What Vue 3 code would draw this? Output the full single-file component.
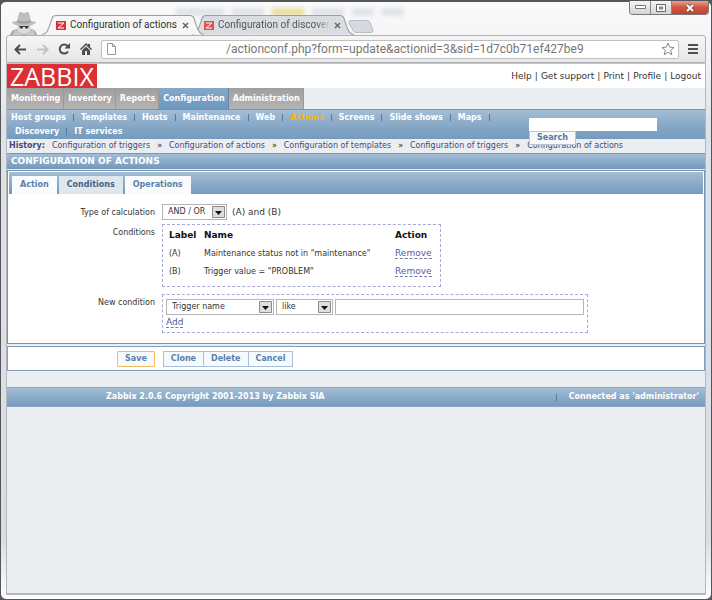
<script setup>
import { ref } from 'vue'

const browserTabs = [
  { title: 'Configuration of actions', active: true },
  { title: 'Configuration of discover', active: false }
]
const userLinks = ['Help', 'Get support', 'Print', 'Profile', 'Logout']
const mainMenu = ['Monitoring', 'Inventory', 'Reports', 'Configuration', 'Administration']
const subMenu = [
  ['Host groups', 'Templates', 'Hosts', 'Maintenance', 'Web', 'Actions', 'Screens', 'Slide shows', 'Maps'],
  ['Discovery', 'IT services']
]
const history = [
  'Configuration of triggers',
  'Configuration of actions',
  'Configuration of templates',
  'Configuration of triggers',
  'Configuration of actions'
]
const formTabs = ['Action', 'Conditions', 'Operations']
const conditions = [
  { label: '(A)', name: 'Maintenance status not in "maintenance"' },
  { label: '(B)', name: 'Trigger value = "PROBLEM"' }
]

const url = ref('/actionconf.php?form=update&actionid=3&sid=1d7c0b71ef427be9')
const search = ref('')
const value = ref('')
const activeTab = ref('Conditions')
</script>

<template>
  <div class="window">
    <header class="titlebar">
      <div class="glass">
        <i class="smudge wide"></i>
        <i class="smudge"></i>
        <i class="smudge yellow"></i>
        <i class="smudge"></i>
        <i class="smudge short"></i>
        <i class="smudge short"></i>
      </div>
      <svg class="incognito" width="28" height="24" viewBox="0 0 28 24">
        <path d="M0 24c1-4 4-6 8-6h12c4 0 6 2 7 6z" fill="#a9abad" />
        <path d="M7 12h14v4c0 4-3 7-7 7s-7-3-7-7z" fill="#dcdddd" />
        <path d="M7 10 9 2c2-2 3 0 5 0s3-2 5 0l2 8 5 1c0 2-5 4-12 4S2 13 2 11z" fill="#bbbdbf" />
        <path d="M7 9c4 2 10 2 14 0v2c-4 2-10 2-14 0z" fill="#9a9c9e" />
        <path d="M9 15h10l-1 2c-1 1-3 1-3-1h-2c0 2-2 2-3 1z" fill="#3f4143" />
        <path d="m5 18 8 6H3zm18 0-8 6h10z" fill="#c6c8c9" />
      </svg>
      <div
        v-for="tab in browserTabs"
        :key="tab.title"
        class="browser-tab"
        :class="{ active: tab.active }"
      >
        <svg class="tab-shape" viewBox="0 0 160 20" preserveAspectRatio="none">
          <path class="tab-fill" d="M0 19.500C4 19 5 17 7 12L10 3Q11 .5 14 .5H146Q149 .5 150 3L153 12C155 17 156 19 160 19.500z" />
          <path d="M0 19.500C4 19 5 17 7 12L10 3Q11 .5 14 .5H146Q149 .5 150 3L153 12C155 17 156 19 160 19.500" fill="none" stroke="#9b9da0" />
        </svg>
        <svg class="favicon" width="10" height="9" viewBox="0 0 10 9">
          <path d="M0 0h10v9H0z" fill="#dc3035" />
          <path d="M2 2h6L2 7h6" fill="none" stroke="#fff" />
        </svg>
        <span class="tab-title">{{ tab.title }}</span>
        <button class="tab-close" type="button" aria-label="Close tab">
          <svg width="7" height="7" viewBox="0 0 7 7"><path d="m1 1 5 5M6 1 1 6" stroke="#666" stroke-width="1.500" /></svg>
        </button>
      </div>
      <svg class="new-tab" width="26" height="13" viewBox="0 0 26 13">
        <path d="M3 .5h16q2 0 3 2l3 8q0 2-2 2H8q-2 0-3-2L1 3Q0 .5 3 .5z" fill="#d5dae0" stroke="#b9bdc2" />
      </svg>
      <div class="window-buttons">
        <button type="button" aria-label="Minimize">
          <svg width="11" height="5" viewBox="0 0 11 5"><path d="M.5.5h10v3H.5z" fill="#fff" stroke="#777" /></svg>
        </button>
        <button type="button" aria-label="Maximize">
          <svg width="10" height="8" viewBox="0 0 10 8"><path d="M.5.5h9v7h-9z" fill="#fff" stroke="#666" /><path d="M3.500 3h3v2h-3z" fill="#ccc" stroke="#666" /></svg>
        </button>
        <button class="close" type="button" aria-label="Close">
          <svg width="10" height="8" viewBox="0 0 10 8"><path d="m2 1 6 6M8 1 2 7" stroke="#734b48" stroke-width="3.500" /><path d="m2 1 6 6M8 1 2 7" stroke="#fff" stroke-width="2" /></svg>
        </button>
      </div>
    </header>

    <div class="toolbar">
      <button type="button" aria-label="Back">
        <svg width="13" height="11" viewBox="0 0 13 11"><path d="M12 5.500H2M6 1 1.500 5.500 6 10" fill="none" stroke="#4c4c4c" stroke-width="2" /></svg>
      </button>
      <button type="button" aria-label="Forward">
        <svg width="13" height="11" viewBox="0 0 13 11"><path d="M1 5.500h10M7 1l4.500 4.500L7 10" fill="none" stroke="#c2c2c2" stroke-width="2" /></svg>
      </button>
      <button type="button" aria-label="Reload">
        <svg width="13" height="12" viewBox="0 0 13 12"><path d="M10 8.500A4.500 4.500 0 1 1 9.500 3" fill="none" stroke="#4c4c4c" stroke-width="2" /><path d="M12 0v5.500H6.500z" fill="#4c4c4c" /></svg>
      </button>
      <button type="button" aria-label="Home">
        <svg width="12" height="12" viewBox="0 0 12 12"><path d="M6 0 0 6l1 1 5-5 5 5 1-1-2-2V1H8v1z" fill="#4c4c4c" /><path d="M2 7.500 6 3.500l4 4V12H7V8H5v4H2z" fill="#4c4c4c" /></svg>
      </button>
      <div class="omnibox">
        <svg width="9" height="12" viewBox="0 0 9 12"><path d="M.5.5h5l3 3v8h-8zM5.500.5v3h3" fill="#fff" stroke="#999" /></svg>
        <input v-model="url" type="text" aria-label="Address">
        <svg width="14" height="14" viewBox="0 0 14 14"><path d="m7 1 1.700 4.200 4.300.3-3.300 2.900 1.100 4.300L7 10.300l-3.800 2.400 1.100-4.300L1 5.500l4.300-.3z" fill="#fff" stroke="#888" /></svg>
      </div>
      <button class="menu-button" type="button" aria-label="Menu">
        <svg width="10" height="10" viewBox="0 0 10 10"><path d="M0 1h10M0 5h10M0 9h10" stroke="#505050" stroke-width="2" /></svg>
      </button>
    </div>

    <main class="page">
      <div class="page-header">
        <a class="logo" href="#">ZABBIX</a>
        <nav class="user-links">
          <template v-for="(link, i) in userLinks" :key="link">
            <span v-if="i">|</span>
            <a href="#">{{ link }}</a>
          </template>
        </nav>
      </div>

      <nav class="main-menu">
        <a
          v-for="item in mainMenu"
          :key="item"
          href="#"
          :class="{ active: item === 'Configuration' }"
        >{{ item }}</a>
      </nav>

      <div class="sub-menu">
        <nav v-for="(row, i) in subMenu" :key="i" class="sub-row">
          <a
            v-for="item in row"
            :key="item"
            href="#"
            :class="{ active: item === 'Actions' }"
          >{{ item }}</a>
        </nav>
        <form class="search" @submit.prevent>
          <input v-model="search" type="text" aria-label="Search">
          <button type="submit">Search</button>
        </form>
      </div>

      <div class="history">
        <b>History:</b>
        <template v-for="(item, i) in history" :key="i">
          <span v-if="i">»</span>
          <a href="#">{{ item }}</a>
        </template>
      </div>

      <h1 class="page-title">CONFIGURATION OF ACTIONS</h1>

      <section class="panel">
        <div class="form-tabs">
          <button
            v-for="tab in formTabs"
            :key="tab"
            type="button"
            :class="{ active: tab === activeTab }"
            @click="activeTab = tab"
          >{{ tab }}</button>
        </div>
        <div class="form">
          <label class="form-label" for="calc">Type of calculation</label>
          <div class="calc">
            <span class="select calc-select">
              <select id="calc"><option>AND / OR</option></select>
              <svg width="13" height="12" viewBox="0 0 13 12"><path d="M.5.5h12v11H.5z" fill="#dedede" stroke="#8c8c8c" /><path d="M3 5h7L6.500 9z" fill="#111" /></svg>
            </span>
            <span class="formula">(A) and (B)</span>
          </div>

          <span class="form-label">Conditions</span>
          <div class="dashed conditions">
            <table>
              <thead>
                <tr><th>Label</th><th>Name</th><th>Action</th></tr>
              </thead>
              <tbody>
                <tr v-for="c in conditions" :key="c.label">
                  <td>{{ c.label }}</td>
                  <td>{{ c.name }}</td>
                  <td><a class="link" href="#">Remove</a></td>
                </tr>
              </tbody>
            </table>
          </div>

          <label class="form-label" for="condition">New condition</label>
          <div class="dashed new-condition">
            <div class="fields">
              <span class="select name-select">
                <select id="condition"><option>Trigger name</option></select>
                <svg width="13" height="12" viewBox="0 0 13 12"><path d="M.5.5h12v11H.5z" fill="#dedede" stroke="#8c8c8c" /><path d="M3 5h7L6.500 9z" fill="#111" /></svg>
              </span>
              <span class="select operator-select">
                <select aria-label="Operator"><option>like</option></select>
                <svg width="13" height="12" viewBox="0 0 13 12"><path d="M.5.5h12v11H.5z" fill="#dedede" stroke="#8c8c8c" /><path d="M3 5h7L6.500 9z" fill="#111" /></svg>
              </span>
              <input v-model="value" type="text" aria-label="Value">
            </div>
            <a class="link" href="#">Add</a>
          </div>
        </div>
      </section>

      <div class="form-actions">
        <button class="save" type="button">Save</button>
        <div class="button-set">
          <button type="button">Clone</button>
          <button type="button">Delete</button>
          <button type="button">Cancel</button>
        </div>
      </div>

      <footer class="footer">
        <span class="copyright">Zabbix 2.0.6 Copyright 2001-2013 by Zabbix SIA</span>
        <span class="connected">Connected as 'administrator'</span>
      </footer>
    </main>
  </div>
</template>

<style>
body {
  margin: 0;
  background: #55565a;
}

* {
  box-sizing: border-box;
}
</style>

<style scoped>
.window {
  display: flex;
  flex-direction: column;
  min-height: 100vh;
  padding: 0 5px 4px;
  border: 1px solid #55565a;
  border-top-width: 2px;
  border-radius: 6px;
  background: linear-gradient(#fafafb, #f1f2f4 60px, #dfe3e8 120px, #d9dde3 90%, #fff);
  font: 8px/12px "DejaVu Sans", Verdana, sans-serif;
  color: #333;
}

button,
input,
select {
  margin: 0;
  padding: 0;
  border: 0;
  background: none;
  font: inherit;
  color: inherit;
}

a {
  color: inherit;
  text-decoration: none;
}

.titlebar {
  position: relative;
  display: flex;
  align-items: flex-end;
  height: 33px;
}

.glass {
  position: absolute;
  top: 6px;
  left: 170px;
  display: flex;
  gap: 8px;
  filter: blur(2px);
}

.smudge {
  width: 32px;
  height: 8px;
  background: #dfe3e7;
}

.smudge.wide {
  width: 48px;
}

.smudge.yellow {
  background: #e7dfa0;
}

.smudge.short {
  width: 22px;
}

.incognito {
  position: relative;
  margin-left: 4px;
}

.browser-tab {
  position: relative;
  z-index: 1;
  display: flex;
  align-items: center;
  width: 162px;
  height: 20px;
  margin-left: -12px;
  padding: 0 15px 0 12px;
  font: 10px/16px Roboto, sans-serif;
  color: #555;
}

.browser-tab.active {
  z-index: 2;
  margin-left: 4px;
  padding-left: 14px;
  color: #333;
}

.tab-shape {
  position: absolute;
  inset: 0;
  z-index: -1;
  width: 100%;
  height: 100%;
}

.tab-fill {
  fill: #d9dde2;
}

.active .tab-fill {
  fill: #f6f6f6;
}

.favicon {
  flex: none;
  margin-right: 4px;
}

.browser-tab:not(.active) .favicon {
  opacity: 0.8;
}

.tab-title {
  flex: 1;
  white-space: nowrap;
}

.browser-tab:not(.active) .tab-title {
  mask-image: linear-gradient(90deg, #000 88%, transparent);
}

.tab-close {
  display: flex;
  margin-left: 4px;
}

.new-tab {
  margin: 0 0 2px -6px;
}

.window-buttons {
  display: flex;
  align-self: flex-start;
  height: 14px;
  margin: -1px -3px 0 auto;
  border: 1px solid #77797c;
  border-top: 0;
  border-radius: 0 0 4px 4px;
  overflow: hidden;
}

.window-buttons button {
  display: flex;
  align-items: center;
  justify-content: center;
  width: 21px;
  border-right: 1px solid #888;
  background: linear-gradient(#f5f5f5, #d4d5d7);
}

.window-buttons .close {
  width: 36px;
  border-right: 0;
  background: linear-gradient(#e3a194, #d2563f 50%, #c5412b);
}

.toolbar {
  display: flex;
  align-items: center;
  gap: 9px;
  height: 28px;
  padding: 0 7px;
  border: 1px solid #b0b2b5;
  border-radius: 3px 3px 0 0;
  background: linear-gradient(#f6f6f6, #e6e6e6);
}

.toolbar button {
  display: flex;
}

.omnibox {
  display: flex;
  flex: 1;
  align-items: center;
  height: 19px;
  padding: 0 3px 0 5px;
  border: 1px solid #bfbfbf;
  border-radius: 2px;
  background: #fff;
}

.omnibox input {
  flex: 1;
  min-width: 0;
  padding-left: 110px;
  font: 12px/16px Roboto, sans-serif;
  color: #777;
}

.page {
  flex: 1;
  border: 1px solid #b5b8bb;
  border-width: 1px 1px 2px;
  border-top-color: #c5c5c5;
  background: #ebeef1;
}

.page-header {
  display: flex;
  align-items: center;
  justify-content: space-between;
  padding-right: 4px;
  background: #fff;
}

.logo {
  height: 24px;
  padding: 0 3px;
  background: #dc2f33;
  font: 25px/24px "Open Sans", sans-serif;
  color: #fff;
}

.user-links {
  display: flex;
  gap: 3px;
  font-size: 9px;
}

.main-menu {
  display: flex;
}

.main-menu a {
  height: 21px;
  padding: 0 3px 0 4px;
  border-right: 1px solid #999;
  background: linear-gradient(#9f9f9f, #b4b4b4);
  font-weight: bold;
  line-height: 22px;
  color: #fff;
}

.main-menu .active {
  border-right-color: #5f86ab;
  background: linear-gradient(#85a8c8, #6d98bf);
}

.sub-menu {
  position: relative;
  height: 30px;
  padding-top: 2px;
  border-top: 1px solid #7195b5;
  background: linear-gradient(#a4bdd5, #84a6c5 60%, #749bbf);
  font-weight: bold;
  color: #fff;
}

.sub-row {
  display: flex;
  height: 14px;
  padding-left: 4px;
}

.sub-row + .sub-row {
  padding-left: 8px;
}

.sub-row a {
  display: flex;
}

.sub-row a::after {
  width: 1px;
  height: 7px;
  margin: 2px 7px;
  background: #57799b;
  content: "";
}

.sub-row + .sub-row a:last-child::after {
  display: none;
}

.sub-row .active {
  color: #f5b800;
}

.search {
  position: absolute;
  top: 8px;
  right: 48px;
  z-index: 1;
  width: 128px;
}

.search input {
  display: block;
  width: 100%;
  height: 13px;
  background: #fff;
  color: #333;
}

.search button {
  display: block;
  height: 14px;
  padding: 0 7px;
  border: 1px solid #b4c8dc;
  background: #f7f9fb;
  color: #5478a4;
  font-weight: bold;
  line-height: 12px;
}

.history {
  display: flex;
  gap: 7px;
  height: 14px;
  padding: 1px 2px;
  white-space: nowrap;
  color: #48487d;
}

.history span {
  color: #222;
}

.page-title {
  height: 16px;
  margin: 0;
  padding-left: 4px;
  border: 1px solid #7898b6;
  border-width: 1px 0;
  background: linear-gradient(#a4bdd5, #749bbf);
  font-size: 9px;
  line-height: 14px;
  color: #fff;
}

.panel {
  margin-top: 1px;
  padding: 1px;
  border: 1px solid #7195b5;
  background: #fff;
}

.form-tabs {
  display: flex;
  gap: 2px;
  height: 22px;
  padding: 4px 3px 0;
  background: linear-gradient(#a4bdd5, #749bbf);
}

.form-tabs button {
  padding: 0 8px;
  background: #f9fbfc;
  font-weight: bold;
  color: #5a7fa8;
}

.form-tabs .active {
  background: #dfe7ee;
  color: #476281;
}

.form {
  display: grid;
  grid-template-columns: 146px minmax(0, 1fr);
  column-gap: 7px;
  padding: 10px 0 9px;
}

.form-label {
  padding-top: 3px;
  text-align: right;
}

.calc {
  display: flex;
  align-items: center;
  gap: 5px;
  margin-bottom: 4px;
}

.formula {
  font-size: 9px;
}

.select {
  position: relative;
  display: flex;
}

.select select {
  width: 100%;
  height: 16px;
  padding-left: 5px;
  border: 1px solid #b5b5b5;
  background: #fff;
  appearance: none;
}

.select svg {
  position: absolute;
  top: 2px;
  right: 2px;
  pointer-events: none;
}

.calc-select {
  width: 65px;
}

.name-select {
  width: 108px;
}

.operator-select {
  width: 57px;
}

.dashed {
  justify-self: start;
  border: 1px dashed #a9a9d6;
}

.conditions {
  width: 279px;
  margin-bottom: 7px;
  padding: 0 6px 5px;
}

.conditions table {
  width: 100%;
  border-collapse: collapse;
}

.conditions th,
.conditions td {
  height: 18px;
  padding: 0;
  text-align: left;
}

.conditions th {
  height: 20px;
  font-size: 9px;
  color: #111;
}

.conditions th:first-child {
  width: 35px;
}

.conditions th:last-child {
  width: 39px;
}

.link {
  border-bottom: 1px dashed #7777b5;
  font-size: 9px;
  line-height: 10px;
  color: #4d5c92;
}

.conditions .link {
  color: #67569a;
}

.new-condition {
  width: 426px;
  max-width: 100%;
  padding: 4px 3px 3px;
}

.fields {
  display: flex;
  gap: 2px;
  margin-bottom: 2px;
}

.fields input {
  flex: 1;
  min-width: 0;
  height: 16px;
  border: 1px solid #b5b5b5;
  background: #fff;
}

.form-actions {
  display: flex;
  align-items: center;
  gap: 8px;
  height: 25px;
  margin-top: 2px;
  padding-left: 109px;
  border: 1px solid #7f9fbd;
  background: #fff;
  font-weight: bold;
  color: #5a7fa8;
}

.form-actions button {
  height: 16px;
  padding: 0 7px;
  border: 1px solid #a9bfda;
  background: #f7fafd;
}

.form-actions .save {
  border-color: #f3bd5f;
  border-radius: 1px;
}

.button-set {
  display: flex;
}

.button-set button + button {
  border-left: 0;
}

.footer {
  display: flex;
  align-items: center;
  justify-content: space-between;
  height: 20px;
  margin-top: 16px;
  padding: 0 6px 0 99px;
  border: 1px solid #8aa6c1;
  border-width: 1px 0;
  background: linear-gradient(#a4bdd5, #749bbf);
  font-weight: bold;
  color: #fff;
}

.connected {
  display: flex;
  align-items: center;
}

.connected::before {
  width: 1px;
  height: 7px;
  margin-right: 12px;
  background: #57799b;
  content: "";
}
</style>
